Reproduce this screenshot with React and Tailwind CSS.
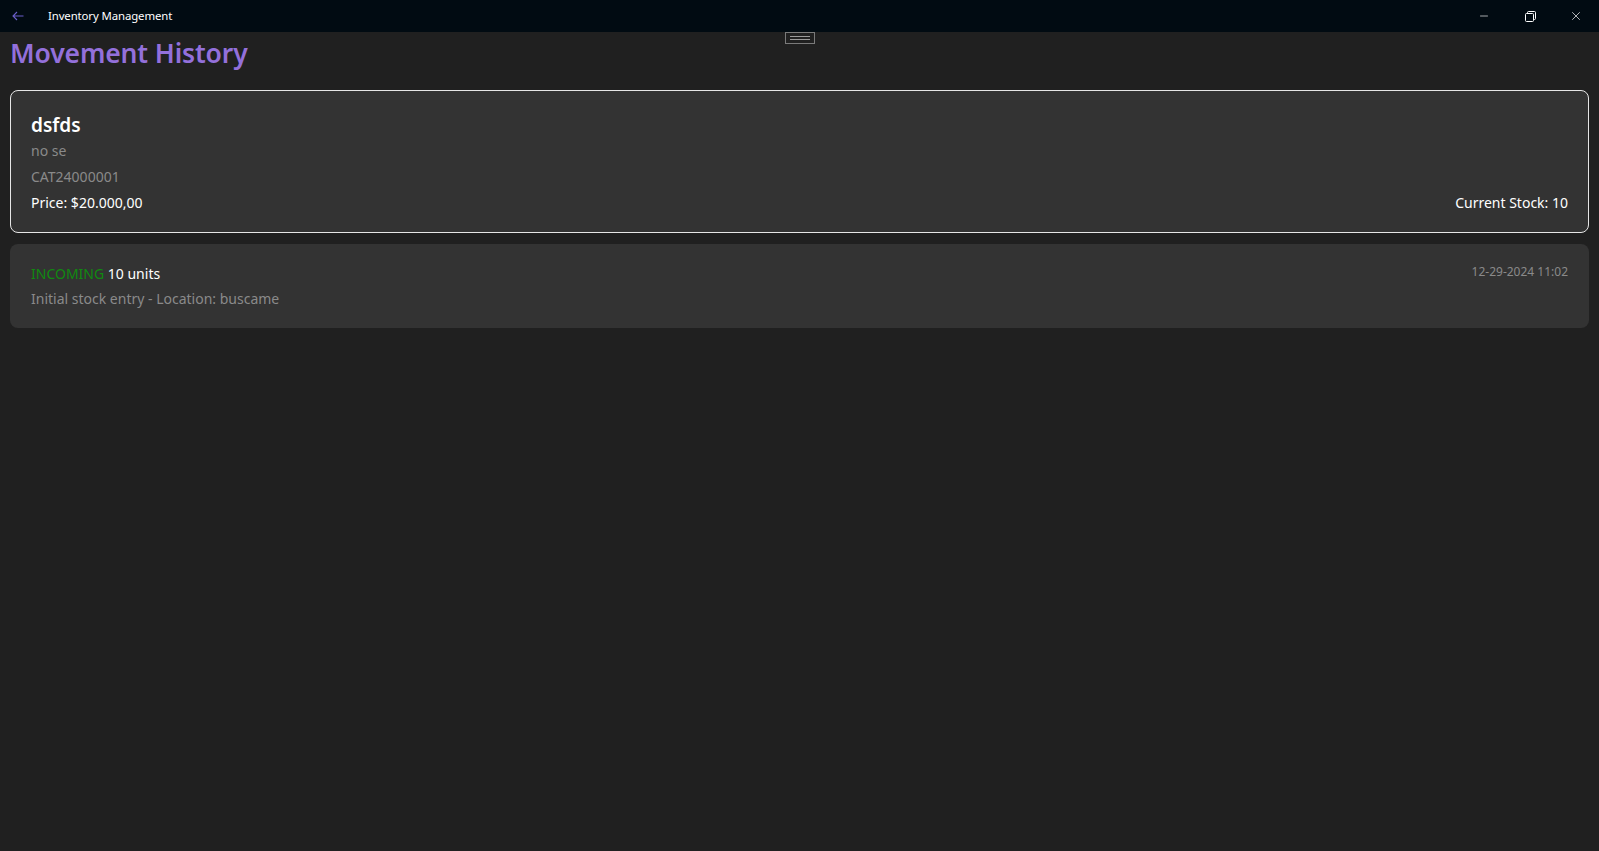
import { Minus, X } from "lucide-react";

const font = { fontFamily: '"Segoe UI", "Noto Sans", "Open Sans", sans-serif' };

function TitleBar() {
  return (
    <div className="flex items-center h-8 bg-[#010b12] text-white shrink-0">
      <div className="w-[36px] flex items-center justify-center">
        <svg width="12" height="10" viewBox="0 0 12 10" fill="none" className="text-[#6b5fc9]">
          <path d="M11.5 5H1M5 1L1 5l4 4" stroke="currentColor" strokeWidth="1.1" />
        </svg>
      </div>
      <span className="ml-[12px] text-[11.4px] tracking-[-0.01em]">Inventory Management</span>
      <div className="ml-auto flex h-full">
        <button className="w-[46px] h-full flex items-center justify-center">
          <Minus size={12} strokeWidth={1.3} />
        </button>
        <button className="w-[46px] h-full flex items-center justify-center">
          <svg width="11" height="11" viewBox="0 0 11 11" fill="none" stroke="currentColor" strokeWidth="1">
            <rect x="0.5" y="2.5" width="8" height="8" rx="1" />
            <path d="M2.5 2.5V1.5a1 1 0 0 1 1-1h6a1 1 0 0 1 1 1v6a1 1 0 0 1-1 1h-1" />
          </svg>
        </button>
        <button className="w-[46px] h-full flex items-center justify-center">
          <X size={14} strokeWidth={1.2} />
        </button>
      </div>
    </div>
  );
}

export default function App() {
  return (
    <div className="w-[1599px] h-[851px] bg-[#202020] flex flex-col overflow-hidden" style={font}>
      <TitleBar />

      {/* drag handle */}
      <div className="relative">
        <div className="absolute left-[785px] top-0 w-[30px] h-[12px] border border-[#7a7a7a] flex flex-col items-center justify-center gap-[2px]">
          <div className="w-[20px] h-px bg-[#9a9a9a]" />
          <div className="w-[20px] h-px bg-[#9a9a9a]" />
        </div>
      </div>

      <div className="px-[10px]">
        <h1 className="text-[26.5px] leading-[40px] mt-[1px] font-semibold tracking-[-0.005em] text-[#9370db]">
          Movement History
        </h1>

        <div className="mt-[17px] rounded-[8px] border border-[#e6e6e6] bg-[#333333] px-[20px] pt-[21px] pb-[16px]">
          <div className="text-[19px] leading-[26px] font-semibold text-white">dsfds</div>
          <div className="text-[14px] leading-[26px] text-[#8a8a8a]">no se</div>
          <div className="text-[14px] leading-[26px] text-[#8a8a8a]">CAT24000001</div>
          <div className="flex justify-between text-[14px] leading-[26px] text-white">
            <span>Price: $20.000,00</span>
            <span>Current Stock: 10</span>
          </div>
        </div>

        <div className="mt-[11px] rounded-[8px] bg-[#333333] px-[21px] pt-[20px] pb-[19px] flex justify-between">
          <div>
            <div className="text-[14px] leading-[20px]">
              <span className="text-[#108a10]">INCOMING</span>
              <span className="text-white"> 10 units</span>
            </div>
            <div className="mt-[5px] text-[14px] leading-[20px] text-[#8a8a8a]">
              Initial stock entry - Location: buscame
            </div>
          </div>
          <div className="text-[12px] leading-[16px] text-[#8a8a8a]">12-29-2024 11:02</div>
        </div>
      </div>
    </div>
  );
}
